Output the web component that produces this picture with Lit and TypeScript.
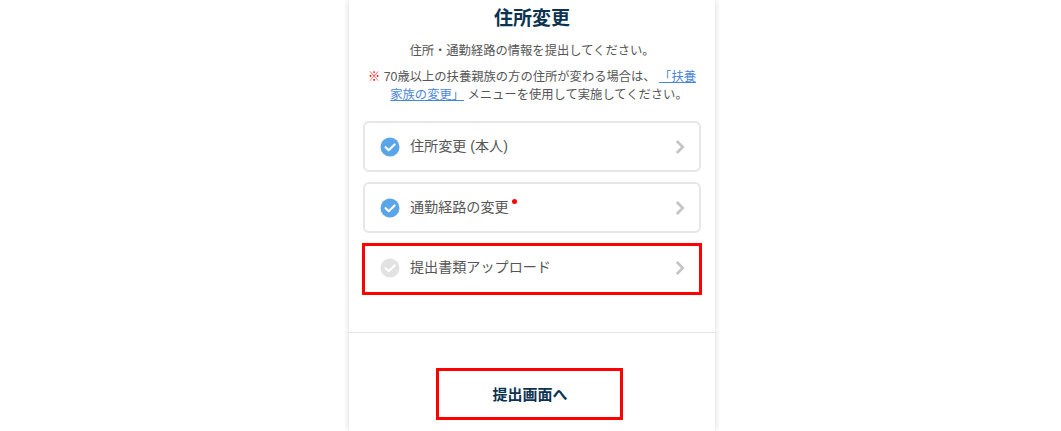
import { LitElement, html, css } from "lit";
import { customElement } from "lit/decorators.js";

const check = (bg: string) => html`<svg class="ck" viewBox="0 0 20 20" width="20" height="20">
  <circle cx="10" cy="10" r="9.5" fill="${bg}"></circle>
  <path d="M5.6 10.2 L8.7 13.2 L14.6 7.4" fill="none" stroke="#fff" stroke-width="2.1" stroke-linecap="round" stroke-linejoin="round"></path>
</svg>`;
const chev = html`<svg class="chev" viewBox="0 0 10 16" width="10" height="16">
  <path d="M1.8 2 L7.8 8 L1.8 14" fill="none" stroke="#c4c4c4" stroke-width="2.6"></path>
</svg>`;

@customElement("app-root")
export class AppRoot extends LitElement {
  static styles = css`
    :host { display: block; height: 431px; overflow: hidden; background: #fff;
      font-family: "Liberation Sans", "Noto Sans CJK JP", sans-serif; color: #555; }
    .card { width: 366px; height: 431px; margin-left: 349px; box-sizing: border-box; background: #fff;
      box-shadow: 0 0 6px rgba(0,0,0,.16); display: flex; flex-direction: column; align-items: center; }
    h1 { margin: 6px 0 0; font-size: 19px; line-height: 26px; font-weight: 700; color: #0c3350; }
    .lead { margin: 10px 0 0; font-size: 12.3px; line-height: 18px; color: #555; }
    .note { margin: 8px 0 0; width: 330px; font-size: 12.3px; line-height: 18px; text-align: center; color: #555; }
    .mark { color: #f00; font-weight: 700; }
    .gap { display: inline-block; width: 14px; }
    a { color: #4a86d8; text-decoration: underline; }
    .list { margin-top: 17px; width: 338px; display: flex; flex-direction: column; gap: 10px; }
    .row { box-sizing: border-box; height: 51px; border: 2px solid #e6e6e6; border-radius: 6px; display: flex; align-items: center;
      padding: 0 14px 0 15px; font-size: 14.1px; color: #555; }
    .row.flag { border-color: transparent; outline: 3px solid #f00; outline-offset: -1px; height: 48px; margin: 2px 1px 0; border-width: 1px; border-radius: 0; padding: 0 14px 2px 15px; }
    .ck { flex: none; margin-right: 10px; }
    .label { flex: 1; padding-bottom: 4px; }
    .dot { display: inline-block; width: 5px; height: 5px; border-radius: 50%; background: #f00; vertical-align: 8px; margin-left: 3px; }
    hr { align-self: stretch; margin: 39px 0 0; border: 0; border-top: 1px solid #e6e6e6; }
    .btn { margin: 38px 5px 0 0; padding: 0 0 2px 1px; box-sizing: border-box; width: 181px; height: 46px; background: #fff; border: 0; outline: 3px solid #f00;
      font: 700 15px "Liberation Sans", "Noto Sans CJK JP", sans-serif; color: #0c3350; }
  `;
  render() {
    return html`<div class="card">
      <h1>住所変更</h1>
      <p class="lead">住所・通勤経路の情報を提出してください。</p>
      <p class="note"><span class="mark">※</span> 70歳以上の扶養親族の方の住所が変わる場合は、 <a href="#">「扶養</a><br /><span class="gap"></span><a href="#">家族の変更」</a> メニューを使用して実施してください。</p>
      <div class="list">
        <div class="row">${check("#5aa5e8")}<span class="label">住所変更 (本人)</span>${chev}</div>
        <div class="row">${check("#5aa5e8")}<span class="label">通勤経路の変更<span class="dot"></span></span>${chev}</div>
        <div class="row flag">${check("#e2e2e2")}<span class="label">提出書類アップロード</span>${chev}</div>
      </div>
      <hr />
      <button class="btn">提出画面へ</button>
    </div>`;
  }
}
